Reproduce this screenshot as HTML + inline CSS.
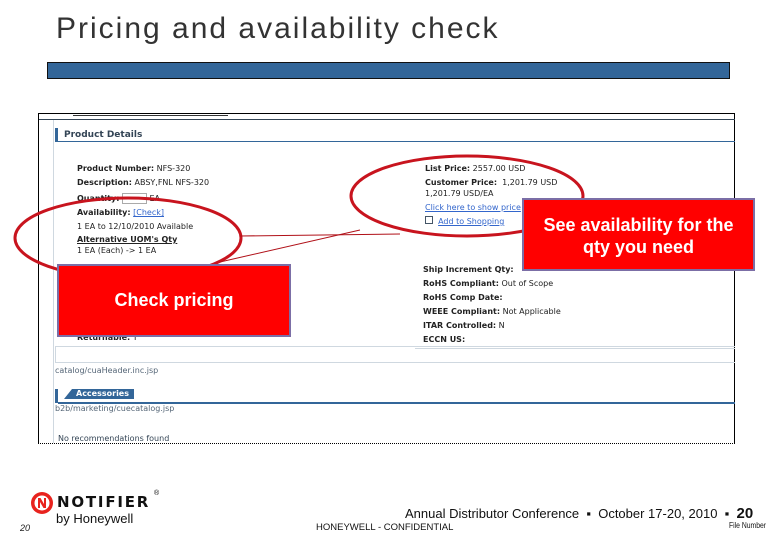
<!DOCTYPE html>
<html><head><meta charset="utf-8"><style>
*{margin:0;padding:0;box-sizing:border-box}
body{width:780px;height:540px;position:relative;background:#fff;font-family:"Liberation Sans",sans-serif;overflow:hidden}
.a{position:absolute;white-space:nowrap}
.s{font-family:"DejaVu Sans","Liberation Sans",sans-serif;font-size:8px;color:#222}
.b{font-weight:bold}
.r{background:#ff0000;border:2px solid #7b6ea6;color:#fff;font-weight:bold;text-align:center;font-size:18px}
</style></head><body>
<div class="a" style="left:56px;top:12px;font-size:30px;color:#333;letter-spacing:2px">Pricing and availability check</div>
<div class="a" style="left:47px;top:62px;width:683px;height:17px;background:#336699;border:1px solid #111"></div>

<div class="a" style="left:38px;top:113px;width:697px;height:331px;border:1px solid #000;border-bottom:1px dotted #000"></div>
<div class="a" style="left:39px;top:119px;width:696px;height:1px;background:#345"></div>
<div class="a" style="left:53px;top:120px;width:1px;height:323px;background:#cfd8e0"></div>
<div class="a" style="left:73px;top:113px;width:155px;height:3px;border-bottom:1px solid #333"></div>
<div class="a" style="left:55px;top:128px;width:3px;height:14px;background:#336699"></div>
<div class="a" style="left:58px;top:141px;width:677px;height:1px;background:#336699"></div>
<div class="a s b" style="left:64px;top:130px;color:#345;font-size:9px">Product Details</div>

<div class="a s" style="left:77px;top:164px"><b>Product Number:</b> NFS-320</div>
<div class="a s" style="left:77px;top:178px"><b>Description:</b> ABSY,FNL NFS-320</div>
<div class="a s" style="left:77px;top:193px"><b>Quantity:</b> <span style="display:inline-block;width:25px;height:11px;border:1px solid #aaa;vertical-align:middle"></span> EA</div>
<div class="a s" style="left:77px;top:208px"><b>Availability:</b> <span style="color:#36c;text-decoration:underline">[Check]</span></div>
<div class="a s" style="left:77px;top:222px">1 EA to 12/10/2010 Available</div>
<div class="a s b" style="left:77px;top:235px;text-decoration:underline">Alternative UOM's Qty</div>
<div class="a s" style="left:77px;top:246px">1 EA (Each) -&gt; 1 EA</div>
<div class="a s" style="left:77px;top:333px"><b>Returnable:</b> Y</div>
<div class="a" style="left:55px;top:346px;width:680px;height:17px;border:1px solid #cfd8e0;border-right:none"></div>
<div class="a s" style="left:55px;top:366px;color:#567">catalog/cuaHeader.inc.jsp</div>
<div class="a" style="left:55px;top:389px;width:3px;height:14px;background:#336699"></div>
<div class="a" style="left:64px;top:389px;width:70px;height:10px;background:#336699;clip-path:polygon(8px 0,100% 0,100% 100%,0 100%)"></div>
<div class="a s b" style="left:76px;top:389px;color:#fff">Accessories</div>
<div class="a" style="left:58px;top:402px;width:677px;height:2px;background:#336699"></div>
<div class="a s" style="left:55px;top:404px;color:#567">b2b/marketing/cuecatalog.jsp</div>
<div class="a s" style="left:58px;top:434px;color:#345">No recommendations found</div>

<div class="a s" style="left:425px;top:164px"><b>List Price:</b> 2557.00 USD</div>
<div class="a s" style="left:425px;top:178px"><b>Customer Price:</b> &nbsp;1,201.79 USD</div>
<div class="a s" style="left:425px;top:189px">1,201.79 USD/EA</div>
<div class="a s" style="left:425px;top:203px;color:#36c;text-decoration:underline">Click here to show price</div>
<div class="a s" style="left:425px;top:216px;color:#36c"><span style="display:inline-block;width:8px;height:8px;border:1px solid #456"></span> &nbsp;<u>Add to Shopping</u></div>
<div class="a s" style="left:423px;top:265px"><b>Ship Increment Qty:</b></div>
<div class="a s" style="left:423px;top:279px"><b>RoHS Compliant:</b> Out of Scope</div>
<div class="a s" style="left:423px;top:293px"><b>RoHS Comp Date:</b></div>
<div class="a s" style="left:423px;top:307px"><b>WEEE Compliant:</b> Not Applicable</div>
<div class="a s" style="left:423px;top:321px"><b>ITAR Controlled:</b> N</div>
<div class="a s" style="left:423px;top:335px"><b>ECCN US:</b></div>
<div class="a" style="left:415px;top:348px;width:320px;height:1px;background:#cfd8e0"></div>

<svg class="a" style="left:0;top:0" width="780" height="540">
<ellipse cx="128" cy="238" rx="113" ry="40" fill="none" stroke="#c8141e" stroke-width="3"/>
<ellipse cx="467" cy="196" rx="116" ry="40" fill="none" stroke="#c8141e" stroke-width="3"/>
<line x1="240" y1="236" x2="400" y2="234" stroke="#b01018" stroke-width="1"/>
<line x1="220" y1="262" x2="360" y2="230" stroke="#b01018" stroke-width="1"/>
</svg>

<div class="a r" style="left:522px;top:198px;width:233px;height:73px;padding-top:14px;line-height:22px">See availability for the<br>qty you need</div>
<div class="a r" style="left:57px;top:264px;width:234px;height:73px;line-height:69px">Check pricing</div>

<svg class="a" style="left:30px;top:491px" width="24" height="24"><circle cx="12" cy="12" r="11" fill="#e8231e"/><circle cx="12" cy="12" r="7.5" fill="#fff"/><path d="M8 17V7h2.5l3.5 6V7h2v10h-2.5l-3.5-6v6z" fill="#e8231e"/></svg>
<div class="a" style="left:57px;top:493px;font-size:15px;font-weight:900;letter-spacing:1.8px;color:#111;font-family:'DejaVu Sans',sans-serif">NOTIFIER</div>
<div class="a" style="left:154px;top:490px;font-size:7px">®</div>
<div class="a" style="left:56px;top:511px;font-size:13px;color:#111">by Honeywell</div>
<div class="a" style="left:20px;top:523px;font-size:9px;font-style:italic;color:#222">20</div>
<div class="a" style="left:405px;top:505px;font-size:13px;color:#111">Annual Distributor Conference &nbsp;▪ &nbsp;October 17-20, 2010 &nbsp;▪ &nbsp;<b style="font-size:15px">20</b></div>
<div class="a" style="left:316px;top:522px;font-size:9.5px;color:#111">HONEYWELL - CONFIDENTIAL</div>
<div class="a" style="left:729px;top:521px;font-size:8px;color:#111;transform:scaleX(0.85);transform-origin:left">File Number</div>
</body></html>
